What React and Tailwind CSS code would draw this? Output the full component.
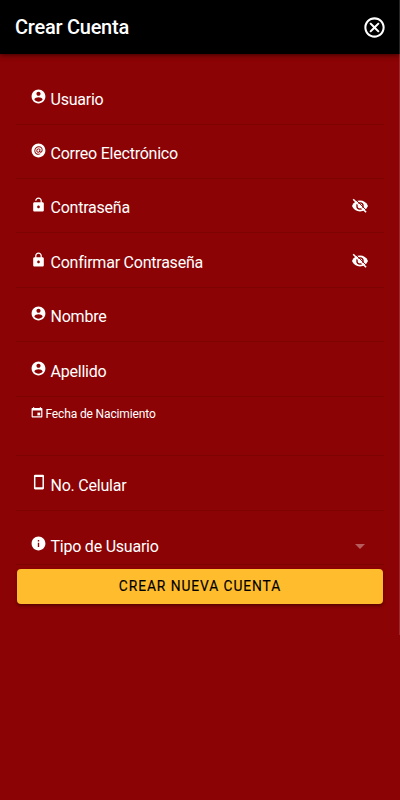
import {
  IoMdCloseCircleOutline,
  IoMdContact,
  IoMdUnlock,
  IoMdLock,
  IoMdInformationCircle,
} from "react-icons/io";
import { IoAtCircle } from "react-icons/io5";

function PhoneIcon({ className }) {
  return (
    <svg className={className} viewBox="0 0 17 17" fill="none" stroke="currentColor">
      <path strokeWidth="1.5" d="M4.7 1.6v13M13.2 1.6v13" />
      <path strokeWidth="2.2" strokeLinecap="round" d="M5.1 1.9h7.700M5.100 14.300h7.700" />
    </svg>
  );
}

function DateIcon({ className }) {
  return (
    <svg className={className} viewBox="0 0 12 12" fill="currentColor">
      <path
        fillRule="evenodd"
        d="M2 1V.2h1.2V1h5.6V.2H10V1h.4c.6 0 1 .4 1 1v7.4c0 .6-.4 1-1 1H1.6c-.6 0-1-.4-1-1V2c0-.6.4-1 1-1zM1.8 3.6v5.6h8.4V3.6z"
      />
      <path d="M6.4 5.6h2.8v2.8H6.4z" />
    </svg>
  );
}

function HiddenIcon({ className }) {
  return (
    <svg className={className} viewBox="0 0 18 18">
      <path
        fill="currentColor"
        d="M1 9C2.4 5.6 5.4 3.6 9 3.6S15.600 5.600 17 9c-1.400 3.400-4.400 5.400-8 5.400S2.400 12.400 1 9z"
      />
      <circle cx="9" cy="9" r="3.1" fill="none" stroke="#8b0304" strokeWidth="1.3" />
      <path d="M3.600 1.500l12.500 12.500" stroke="#8b0304" strokeWidth="1" />
      <path d="M2.200 2.300l12.900 12.900" stroke="currentColor" strokeWidth="1.600" />
    </svg>
  );
}

const rows = [
  { label: "Usuario", Icon: IoMdContact, h: "h-[55px]" },
  { label: "Correo Electrónico", Icon: IoAtCircle, h: "h-[54px]" },
  { label: "Contraseña", Icon: IoMdUnlock, h: "h-[54px]", eye: true },
  { label: "Confirmar Contraseña", Icon: IoMdLock, h: "h-[55px]", eye: true },
  { label: "Nombre", Icon: IoMdContact, h: "h-[54px]" },
  { label: "Apellido", Icon: IoMdContact, h: "h-[55px]" },
];

function Field({ label, Icon, h, eye, select }) {
  return (
    <div className={`${h} flex items-end border-b border-[#7d0202] px-[14px]`}>
      <div className={`flex grow items-start gap-[3.5px] ${select ? "pb-[5.5px]" : "pb-[12.5px]"}`}>
        <Icon className="mt-[1.5px] size-[17px] shrink-0" />
        <span className="pt-[1px] text-[16px] leading-[24px] tracking-[-0.23px]">{label}</span>
      </div>
      {eye && <HiddenIcon className="mb-[17px] mr-px size-[18px]" />}
      {select && (
        <span className="mb-[15px] mr-[5px] border-x-[5px] border-t-[5px] border-x-transparent border-t-[#b75c5c]" />
      )}
    </div>
  );
}

export default function App() {
  return (
    <div className="relative flex h-[800px] w-[400px] flex-col overflow-hidden bg-[#8b0304] text-white font-[Roboto,sans-serif]">
      <header className="flex h-[54px] shrink-0 items-center justify-between bg-black pl-[15px] pr-[13.5px] shadow-[0_1px_5px_rgba(0,0,0,0.6)]">
        <h1 className="text-[20px] font-medium leading-[28px] tracking-[-0.25px]">Crear Cuenta</h1>
        <IoMdCloseCircleOutline className="size-[25px]" />
      </header>
      <main className="flex flex-col px-4 pt-4">
        {rows.map((r) => (
          <Field key={r.label} {...r} />
        ))}
        <div className="flex h-[59px] items-start gap-[3px] border-b border-[#7d0202] pl-[14.5px] pt-[8px]">
          <DateIcon className="mt-[2px] size-[12px]" />
          <span className="text-[12px] leading-[18px] tracking-[-0.14px]">Fecha de Nacimiento</span>
        </div>
        <Field label="No. Celular" Icon={PhoneIcon} h="h-[55px]" />
        <Field label="Tipo de Usuario" Icon={IoMdInformationCircle} h="h-[54px]" select />
        <button className="mx-[1px] mt-[4px] h-[35px] rounded-[4px] bg-[#ffbd2e] pb-px text-[13.8px] font-normal tracking-[0.92px] text-black shadow-[0_2px_3px_rgba(0,0,0,0.35)] [-webkit-text-stroke:0.15px_black]">
          CREAR NUEVA CUENTA
        </button>
      </main>
      <div className="absolute right-0 top-0 h-[635px] w-px bg-white/15" />
    </div>
  );
}
